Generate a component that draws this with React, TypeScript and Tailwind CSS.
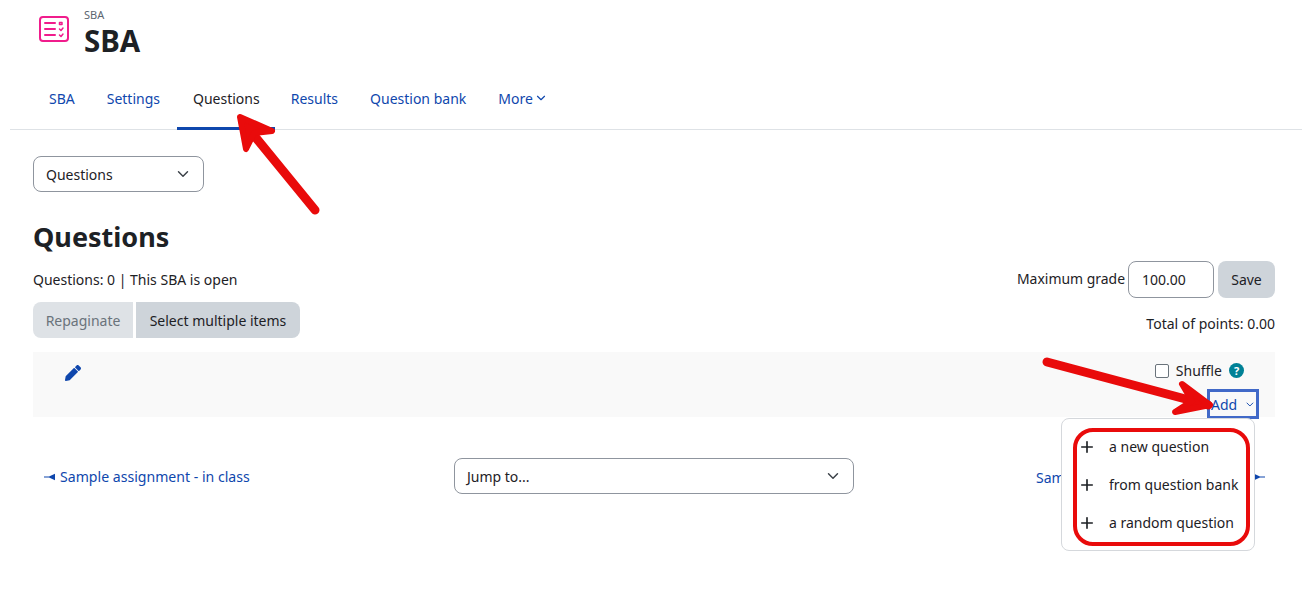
import React from "react";
import { ChevronDown, Plus } from "lucide-react";

const TABS = ["SBA", "Settings", "Questions", "Results", "Question bank"];

function ActivityIcon() {
  return (
    <svg width="32" height="28" viewBox="0 0 32 28" fill="none" stroke="#f01c8c" strokeWidth="2" strokeLinecap="round" strokeLinejoin="round">
      <rect x="1" y="2" width="28" height="24" rx="3" />
      <path d="M6 8h10M6 14h10M6 20h10" />
      <path d="M20.5 7.5h2.5v2h-2.5zM20.5 14l1.5 1.5 2-2.5M20.5 20l1.5 1.5 2-2.5" strokeWidth="1.5" />
    </svg>
  );
}

function PencilIcon() {
  return (
    <svg width="16" height="16" viewBox="0 0 512 512" fill="#0f47ad">
      <path d="M497.9 142.1l-46.1 46.1c-4.7 4.7-12.3 4.7-17 0l-111-111c-4.7-4.7-4.7-12.3 0-17l46.1-46.1c18.7-18.7 49.1-18.7 67.9 0l60.1 60.1c18.8 18.7 18.8 49.1 0 67.9zM284.2 99.8L21.6 362.4.4 483.9c-2.9 16.4 11.4 30.6 27.8 27.8l121.5-21.3 262.6-262.6c4.7-4.7 4.7-12.3 0-17l-111-111c-4.8-4.7-12.4-4.7-17.1 0z" />
    </svg>
  );
}

function PinArrow({ flip }: { flip?: boolean }) {
  return (
    <svg width="11" height="8" viewBox="0 0 11 8" fill="#0f47ad" className={flip ? "rotate-180" : ""}>
      <path d="M0 3.4h5L11 .8v6.4L5 4.6H0z" />
    </svg>
  );
}

function Annotations() {
  return (
    <svg className="absolute left-0 top-0 pointer-events-none" width="1302" height="592" fill="none" stroke="#e90b0b" strokeLinecap="round" strokeLinejoin="round">
      <path d="M315 210L243 122" strokeWidth="9" />
      <path d="M246 149L240 117L272 131L254 133Z" strokeWidth="6" fill="#e90b0b" />
      <path d="M1047 362L1208 405" strokeWidth="9" />
      <path d="M1182 384L1210 405L1175 412L1192 401Z" strokeWidth="6" fill="#e90b0b" />
    </svg>
  );
}

export default function App() {
  return (
    <div className="relative h-[592px] w-[1302px] overflow-hidden bg-white text-[14px] text-[#1d2125] font-['Noto_Sans','Open_Sans',sans-serif]">
      {/* Page header */}
      <div className="flex h-[62px] pl-[39px] pt-[15px]">
        <ActivityIcon />
        <div className="ml-[13px] -mt-[9px]">
          <div className="text-[11px] leading-[16px] mt-[1px] text-[#5c6670]">SBA</div>
          <h1 className="text-[29.5px] font-bold leading-[34px] mt-[1px]">SBA</h1>
        </div>
      </div>

      {/* Tabs */}
      <nav className="ml-[10px] flex h-[68px] items-end border-b border-[#dee2e6] pl-[23px]">
        {TABS.map((t) =>
          t === "Questions" ? (
            <a key={t} className="ml-px flex h-[53px] items-center border-b-[3px] border-[#0f47ad] pl-4 pr-[15px] pb-[8px] -mb-px text-[#1d2125]">{t}</a>
          ) : (
            <a key={t} className="flex h-[53px] items-center border-b-[3px] border-transparent px-4 pb-[8px] -mb-px text-[#0f47ad]">{t}</a>
          )
        )}
        <a className="flex h-[53px] items-center gap-[1px] border-b-[3px] border-transparent px-4 pb-[8px] -mb-px text-[#0f47ad]">
          More <ChevronDown size={14} strokeWidth={2} />
        </a>
      </nav>

      {/* Main content */}
      <div className="px-[27px] pl-[33px] pt-[26px]">
        <div className="flex h-9 w-[171px] items-center justify-between rounded-lg border border-[#8f959e] pl-3 pr-[11px]">
          <span className="pt-[1px]">Questions</span>
          <ChevronDown size={18} strokeWidth={1.9} className="text-[#3a4047]" />
        </div>

        <h2 className="mt-[25px] text-[27px] font-bold leading-[40px]">Questions</h2>

        <div className="mt-[4px] flex h-[37px] items-center justify-between">
          <span>Questions: 0 | This SBA is open</span>
          <div className="flex items-center">
            <span className="text-[13.95px]">Maximum grade</span>
            <div className="ml-[3px] flex h-[37px] w-[86px] items-center rounded-lg border border-[#8f959e] pl-[13px]">100.00</div>
            <div className="ml-[4px] flex h-[37px] w-[57px] items-center justify-center rounded-lg bg-[#ced4da]">Save</div>
          </div>
        </div>

        <div className="mt-[4px] flex h-9 items-start justify-between">
          <div className="flex gap-[3px]">
            <div className="flex h-9 w-[100px] items-center justify-center rounded-l-lg bg-[#dee2e6] text-[#6a737b]">Repaginate</div>
            <div className="flex h-9 w-[164px] items-center justify-center rounded-r-lg bg-[#ced4da]">Select multiple items</div>
          </div>
          <span className="mt-[11px] leading-[22px]">Total of points: 0.00</span>
        </div>

        {/* Section bar */}
        <div className="mt-[14px] flex h-[65px] justify-between bg-[#f9f9f9] pl-[32px] pr-[16px]">
          <div className="pt-[13px]">
            <PencilIcon />
          </div>
          <div className="flex flex-col items-end">
            <div className="mr-[15px] flex h-[37px] items-center">
              <span className="h-[14px] w-[14px] rounded-[2px] border border-[#6a737b] bg-white" />
              <span className="ml-[7px]">Shuffle</span>
              <span className="ml-[7px] flex h-[15px] w-[15px] items-center justify-center rounded-full bg-[#008196] text-[11px] font-bold leading-none text-white">?</span>
            </div>
          </div>
        </div>

        {/* Activity navigation */}
        <div className="mt-[41px] flex h-9 items-center">
          <a className="ml-[11px] flex w-[410px] items-center gap-[5px] pt-[2px] text-[14.1px] text-[#0f47ad]">
            <PinArrow /> Sample assignment - in class
          </a>
          <div className="flex h-9 w-[400px] items-center justify-between rounded-lg border border-[#8f959e] pl-3 pr-[11px]">
            <span>Jump to...</span>
            <ChevronDown size={18} strokeWidth={1.9} className="text-[#3a4047]" />
          </div>
          <a className="ml-[182px] flex items-center gap-[3px] pt-[2px] text-[#0f47ad]">
            <span className="w-[215px]">Sample</span> <PinArrow flip />
          </a>
        </div>
      </div>

      {/* Add menu */}
      <div className="absolute left-[1207px] top-[389px] flex h-[30px] w-[52px] items-center gap-[7px] border-[3px] border-[#4169c8] pl-[1px] text-[#0f47ad]">
        Add <ChevronDown size={13} strokeWidth={1.9} />
      </div>
      <div className="absolute left-[1061px] top-[418px] flex h-[133px] w-[194px] flex-col justify-center rounded-lg border border-[#d5d8dc] bg-white pl-[16px]">
        {["a new question", "from question bank", "a random question"].map((label) => (
          <div key={label} className="flex h-[38px] items-center">
            <Plus size={18} strokeWidth={2.2} className="text-[#1d2125]" />
            <span className="ml-[13px] whitespace-nowrap">{label}</span>
          </div>
        ))}
      </div>
      <div className="absolute left-[1073px] top-[428px] h-[118px] w-[177px] rounded-[20px] border-[4px] border-[#e90b0b]" />

      <Annotations />
    </div>
  );
}
